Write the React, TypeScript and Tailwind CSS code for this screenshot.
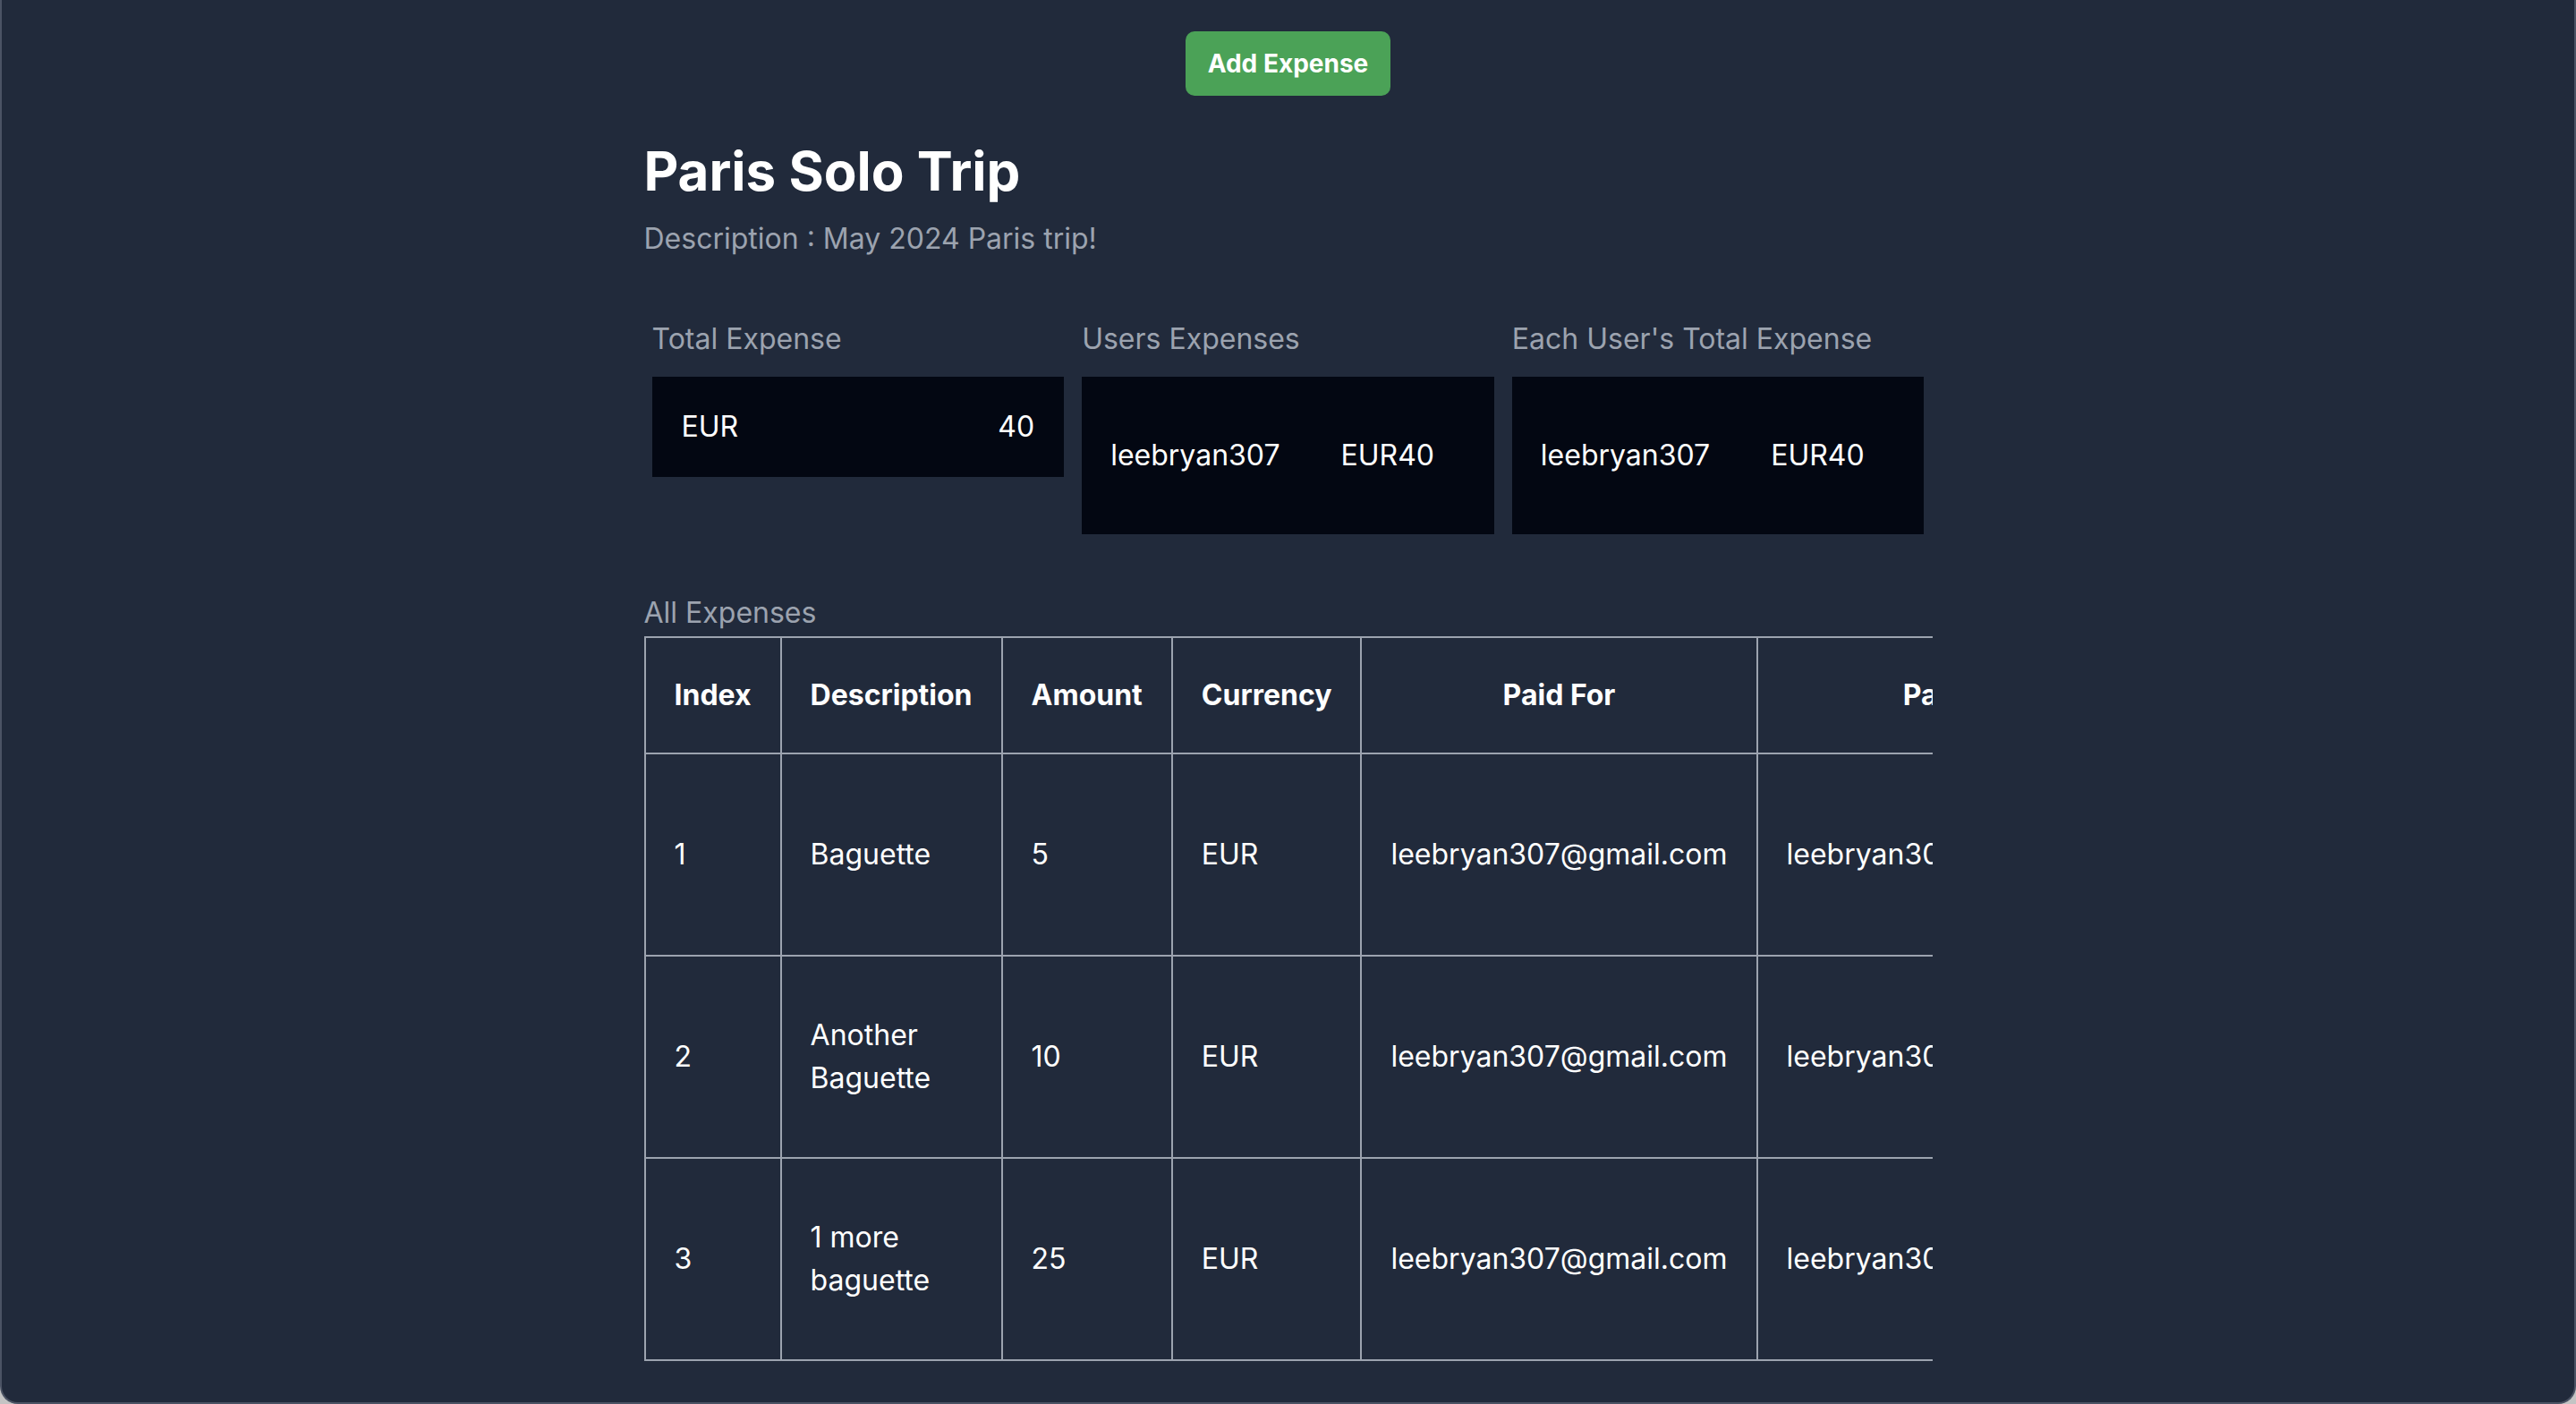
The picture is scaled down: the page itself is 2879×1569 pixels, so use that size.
import React from "react";

const rows = [
  { i: "1", d: "Baguette", a: "5", c: "EUR", pf: "leebryan307@gmail.com", pb: "leebryan307@gmail.com", dt: "May 18 2024" },
  { i: "2", d: "Another Baguette", a: "10", c: "EUR", pf: "leebryan307@gmail.com", pb: "leebryan307@gmail.com", dt: "May 18 2024" },
  { i: "3", d: "1 more baguette", a: "25", c: "EUR", pf: "leebryan307@gmail.com", pb: "leebryan307@gmail.com", dt: "May 19 2024" },
];

export default function App() {
  return (
    <div className="h-[1569px] w-full bg-[#c4c4c4] font-['Inter',sans-serif]">
      <div className="h-full overflow-hidden rounded-b-[20px] border-x-2 border-b-2 border-[#4b5364] bg-[#212a3b]">
        <div className="flex justify-center pt-[35px]">
          <button className="h-[72px] rounded-[10px] bg-[#4ba257] px-[25px] text-[28px] leading-[40px] font-bold text-white">
            Add Expense
          </button>
        </div>
        <div className="mx-auto mt-[48px] w-[1440px]">
          <h1 className="text-[60px] leading-[72px] font-bold text-white">Paris Solo Trip</h1>
          <p className="mt-[16px] text-[32px] leading-[48px] text-[#9ca3af]">Description : May 2024 Paris trip!</p>

          <div className="mt-[64px] grid grid-cols-3 gap-[20px] px-[9px]">
            <div>
              <div className="text-[32px] leading-[48px] text-[#9ca3af]">Total Expense</div>
              <div className="mt-[18px] flex justify-between bg-[#030712] px-[33px] py-[32px] text-[32px] leading-[48px] text-white">
                <span>EUR</span>
                <span>40</span>
              </div>
            </div>
            <div>
              <div className="text-[32px] leading-[48px] text-[#9ca3af]">Users Expenses</div>
              <div className="mt-[18px] flex gap-[68px] bg-[#030712] px-[32px] py-[64px] text-[32px] leading-[48px] text-white">
                <span>leebryan307</span>
                <span>EUR40</span>
              </div>
            </div>
            <div>
              <div className="text-[32px] leading-[48px] text-[#9ca3af]">Each User's Total Expense</div>
              <div className="mt-[18px] flex gap-[68px] bg-[#030712] px-[32px] py-[64px] text-[32px] leading-[48px] text-white">
                <span>leebryan307</span>
                <span>EUR40</span>
              </div>
            </div>
          </div>

          <div className="mt-[64px] text-[32px] leading-[48px] text-[#9ca3af]">All Expenses</div>
          <div className="mt-[2px] overflow-hidden">
            <table className="w-full border-collapse text-[32px] leading-[48px] text-white">
              <thead>
                <tr>
                  {["Index", "Description", "Amount", "Currency", "Paid For", "Paid By", "Date"].map((h) => (
                    <th key={h} className="border-2 border-[#9ca3af] px-[32px] py-[40px] text-center font-bold">
                      {h}
                    </th>
                  ))}
                </tr>
              </thead>
              <tbody>
                {rows.map((r) => (
                  <tr key={r.i}>
                    {[r.i, r.d, r.a, r.c, r.pf, r.pb, r.dt].map((v, k) => (
                      <td key={k} className="border-2 border-[#9ca3af] px-[32px] py-[40px] text-left align-middle">
                        {v}
                      </td>
                    ))}
                  </tr>
                ))}
              </tbody>
            </table>
          </div>
        </div>
      </div>
    </div>
  );
}
